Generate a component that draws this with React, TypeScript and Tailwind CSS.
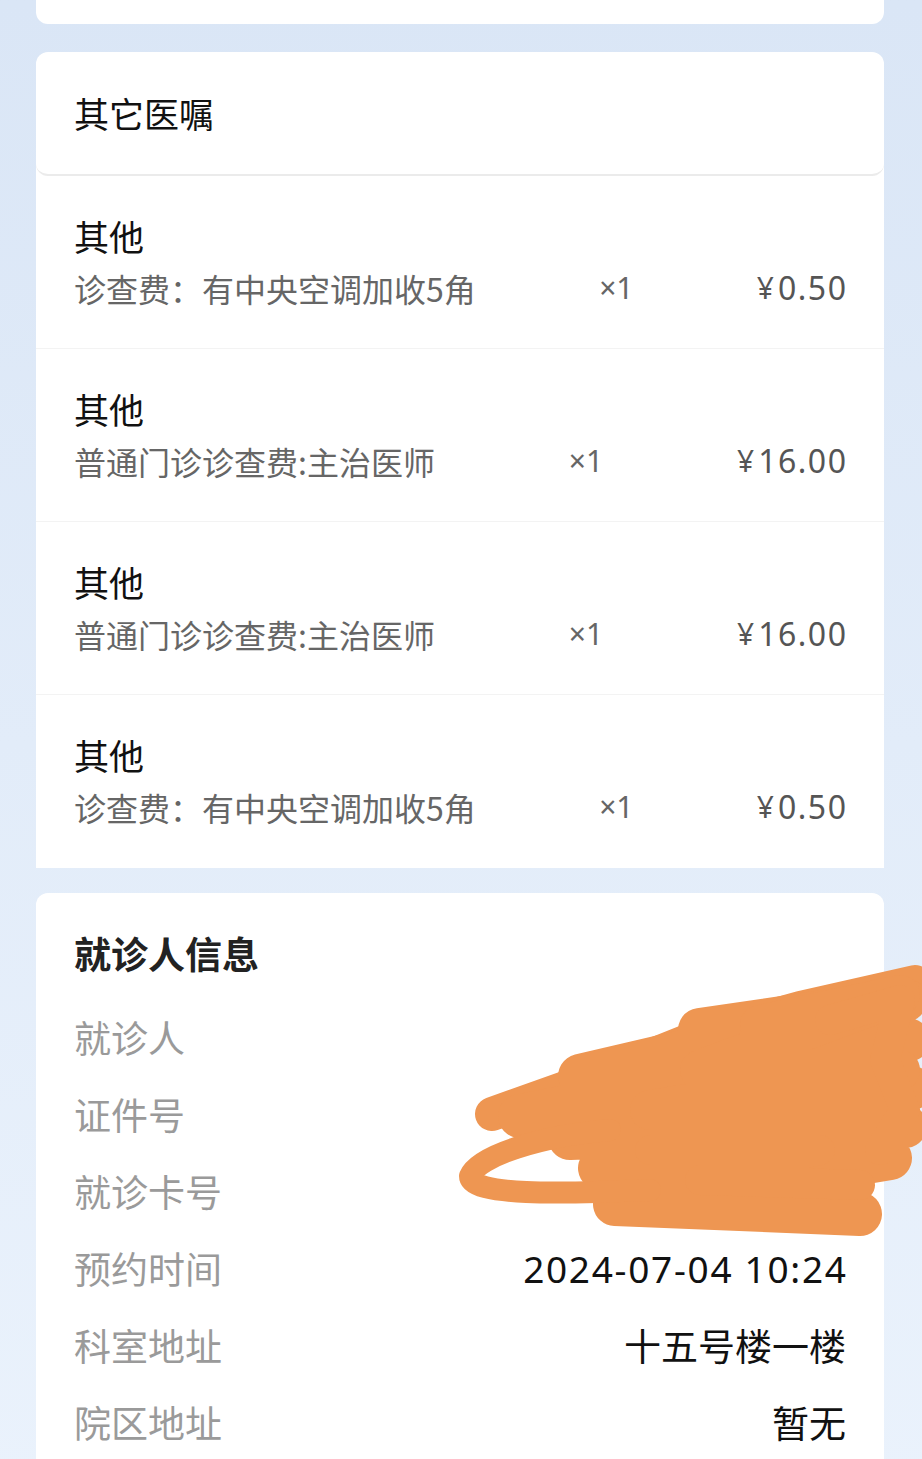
import React from "react";

const FONT = { fontFamily: '"Noto Sans CJK SC", "Noto Sans", sans-serif' };
const LATIN = { fontFamily: '"Noto Sans", "Noto Sans CJK SC", sans-serif' };

type Item = { name: string; qty: string; price: string };

const ITEMS: Item[] = [
  { name: "诊查费：有中央空调加收5角", qty: "×1", price: "0.50" },
  { name: "普通门诊诊查费:主治医师", qty: "×1", price: "16.00" },
  { name: "普通门诊诊查费:主治医师", qty: "×1", price: "16.00" },
  { name: "诊查费：有中央空调加收5角", qty: "×1", price: "0.50" },
];

const INFO: { label: string; value: string; mono?: boolean }[] = [
  { label: "就诊人", value: "" },
  { label: "证件号", value: "" },
  { label: "就诊卡号", value: "" },
  { label: "预约时间", value: "2024-07-04 10:24", mono: true },
  { label: "科室地址", value: "十五号楼一楼" },
  { label: "院区地址", value: "暂无" },
];

function OrderRow({ item, last }: { item: Item; last: boolean }) {
  return (
    <div className={`px-[38px] pt-[40px] ${last ? "pb-[41px]" : "pb-[40px] border-b border-[#f3f3f3]"}`}>
      <div className="text-[35px] leading-[40px] text-[#111]">其他</div>
      <div className="mt-[12px] flex items-center justify-between text-[32px] leading-[40px] text-[#666]">
        <span>{item.name}</span>
        <span className="text-[30px] text-[#666]" style={LATIN}>
          {item.qty}
        </span>
        <span className="-mr-[1.5px] flex items-center tracking-[1.5px] text-[#555]" style={LATIN}>
          <span className="mr-[4px] text-[30px] tracking-normal">¥</span>
          {item.price}
        </span>
      </div>
    </div>
  );
}

function Scribble() {
  return (
    <svg
      className="pointer-events-none absolute left-0 top-0"
      width={922}
      height={1459}
      viewBox="0 0 922 1459"
      fill="none"
    >
      <g stroke="#ee9652" strokeLinecap="round" strokeLinejoin="round">
        <path strokeWidth={34} d="M492 1114 L610 1072 L700 1036 L800 1008 L915 982" />
        <path
          strokeWidth={44}
          d="M700 1030 L905 1000 L580 1076 L908 1040 L520 1116 L912 1088 L570 1138 L905 1126 L600 1168 L890 1158 L615 1204 L860 1214"
        />
        <path strokeWidth={40} d="M760 1025 L900 995 L700 1070 L900 1070 L650 1110 L880 1110" />
        <path strokeWidth={30} d="M830 1020 L900 1000 L885 1060 L905 1110 L880 1150" />
        <path strokeWidth={22} d="M610 1130 C540 1136 478 1156 470 1176 C470 1196 560 1194 650 1190" />
        <path strokeWidth={30} d="M650 1150 L820 1150 L700 1180 L860 1185" />
      </g>
    </svg>
  );
}

export default function App() {
  return (
    <div
      className="relative min-h-[1459px] w-full overflow-hidden bg-gradient-to-b from-[#dae6f6] via-[#e2ecf9] to-[#eaf2fc] pl-[36px] pr-[38px]"
      style={FONT}
    >
      {/* tail of the previous card */}
      <div className="h-[24px] rounded-b-[12px] bg-white" />

      {/* 其它医嘱 */}
      <div className="mt-[28px] rounded-t-[12px] bg-white">
        <div className="flex h-[124px] items-center rounded-[12px] border-b-2 border-[#ebebeb] px-[38px] text-[35px] text-[#111]">
          其它医嘱
        </div>
        {ITEMS.map((item, i) => (
          <OrderRow key={i} item={item} last={i === ITEMS.length - 1} />
        ))}
      </div>

      {/* 就诊人信息 */}
      <div className="mt-[25px] rounded-t-[12px] bg-white px-[38px] pt-[35px] pb-[20px]">
        <div className="text-[37px] font-bold leading-[50px] text-[#222]">就诊人信息</div>
        <div className="mt-[21px]">
          {INFO.map((row) => (
            <div key={row.label} className="flex items-center justify-between text-[37px] leading-[77px]">
              <span className="text-[#9a9a9a]">{row.label}</span>
              <span
                className={row.mono ? "-mr-[1.7px] tracking-[1.7px] text-[#111]" : "text-[#111]"}
                style={row.mono ? LATIN : undefined}
              >
                {row.value}
              </span>
            </div>
          ))}
        </div>
      </div>

      <Scribble />
    </div>
  );
}
